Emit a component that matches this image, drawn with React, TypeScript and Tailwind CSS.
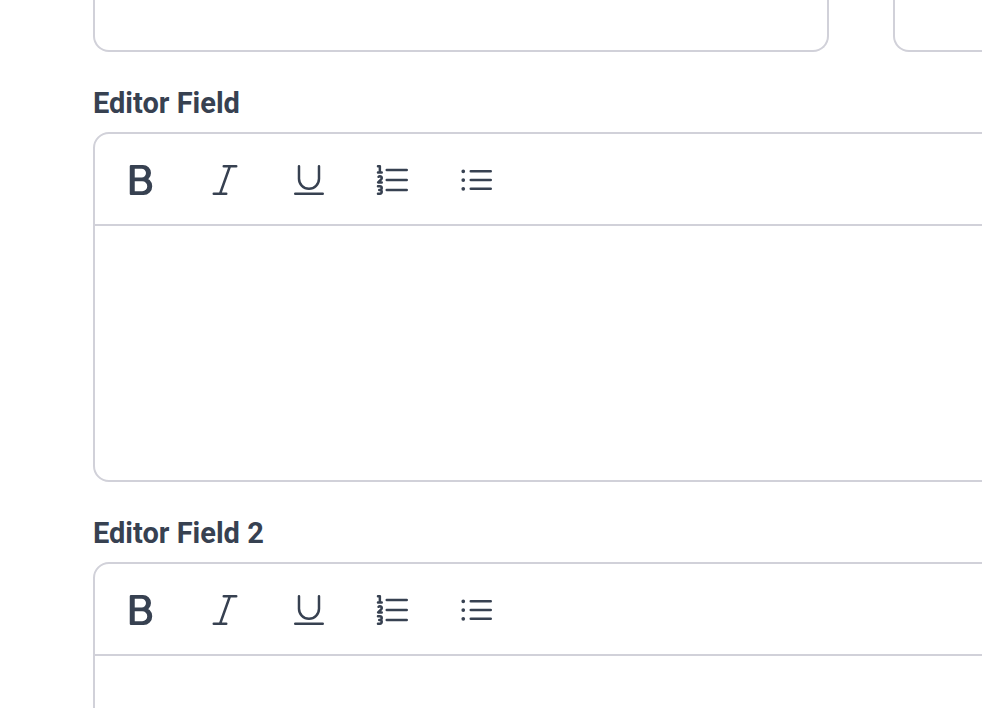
import React from 'react';

const icons = [
  {
    name: 'Bold',
    d: 'M6.75 3.744h-.753v8.25h7.125a4.125 4.125 0 0 0 0-8.25H6.75Zm0 0v.38m0 16.122h6.747a4.5 4.5 0 0 0 0-9.001h-7.5v9h.753Zm0 0v-.37m0-15.751h6a3.75 3.75 0 1 1 0 7.5h-6m0-7.5v7.5m0 0v8.25m0-8.25h6.375a4.125 4.125 0 0 1 0 8.25H6.75m.747-15.38h4.875a3.375 3.375 0 0 1 0 6.75H7.497v-6.75Zm0 7.5h5.25a3.75 3.75 0 0 1 0 7.5h-5.25v-7.5Z',
  },
  { name: 'Italic', d: 'M5.248 20.246H9.05m0 0h3.696m-3.696 0 5.893-16.502m0 0h-3.697m3.697 0h3.803' },
  { name: 'Underline', d: 'M17.995 3.744v7.5a6 6 0 1 1-12 0v-7.5m-2.25 16.502h16.5' },
  {
    name: 'Numbered list',
    d: 'M8.242 5.992h12m-12 6.003H20.24m-12 5.999h12M4.117 7.495v-3.75H2.99m1.125 3.75H2.99m1.125 0H5.24m-1.92 2.577a1.125 1.125 0 1 1 1.591 1.59l-1.83 1.83h2.16M2.99 15.745h1.125a1.125 1.125 0 0 1 0 2.25H3.74m0-.002h.375a1.125 1.125 0 0 1 0 2.25H2.99',
  },
  {
    name: 'Bullet list',
    d: 'M8.25 6.75h12M8.25 12h12m-12 5.25h12M3.75 6.75h.007v.008H3.75V6.75Zm.375 0a.375.375 0 1 1-.75 0 .375.375 0 0 1 .75 0ZM3.75 12h.007v.008H3.75V12Zm.375 0a.375.375 0 1 1-.75 0 .375.375 0 0 1 .75 0Zm-.375 5.25h.007v.008H3.75v-.008Zm.375 0a.375.375 0 1 1-.75 0 .375.375 0 0 1 .75 0Z',
  },
];

const EditorField: React.FC<{ id: string; label: string }> = ({ id, label }) => (
  <div>
    <label htmlFor={id} className="block mb-[10px] text-[29px] leading-[38px] font-bold">
      {label}
    </label>
    <div className="border-2 border-[#d1d1d9] rounded-2xl overflow-hidden">
      <div className="flex px-1 pt-[26px] pb-6 border-b-2 border-[#d1d1d9]">
        {icons.map((icon) => (
          <button key={icon.name} type="button" aria-label={icon.name} className="px-[22px]">
            <svg
              viewBox="0 0 24 24"
              fill="none"
              stroke="currentColor"
              strokeWidth={1.5}
              strokeLinecap="round"
              strokeLinejoin="round"
              className="size-10"
            >
              <path d={icon.d} />
            </svg>
          </button>
        ))}
      </div>
      <textarea id={id} className="block w-full h-[254px] px-6 py-4 text-[29px] resize-none outline-none" />
    </div>
  </div>
);

export default function App() {
  return (
    <div className="h-screen overflow-hidden bg-white text-[#374151] font-['Roboto',sans-serif]">
      {/* the form runs on past the right edge of the window */}
      <form className="ml-[93px] -mr-[647px] space-y-8">
        <div className="grid grid-cols-2 gap-16">
          <input
            aria-label="First field"
            className="h-[52px] px-6 text-[29px] border-2 border-t-0 border-[#d1d1d9] rounded-b-2xl outline-none"
          />
          <input
            aria-label="Second field"
            className="h-[52px] px-6 text-[29px] border-2 border-t-0 border-[#d1d1d9] rounded-b-2xl outline-none"
          />
        </div>
        <EditorField id="editor-1" label="Editor Field" />
        <EditorField id="editor-2" label="Editor Field 2" />
      </form>
    </div>
  );
}
